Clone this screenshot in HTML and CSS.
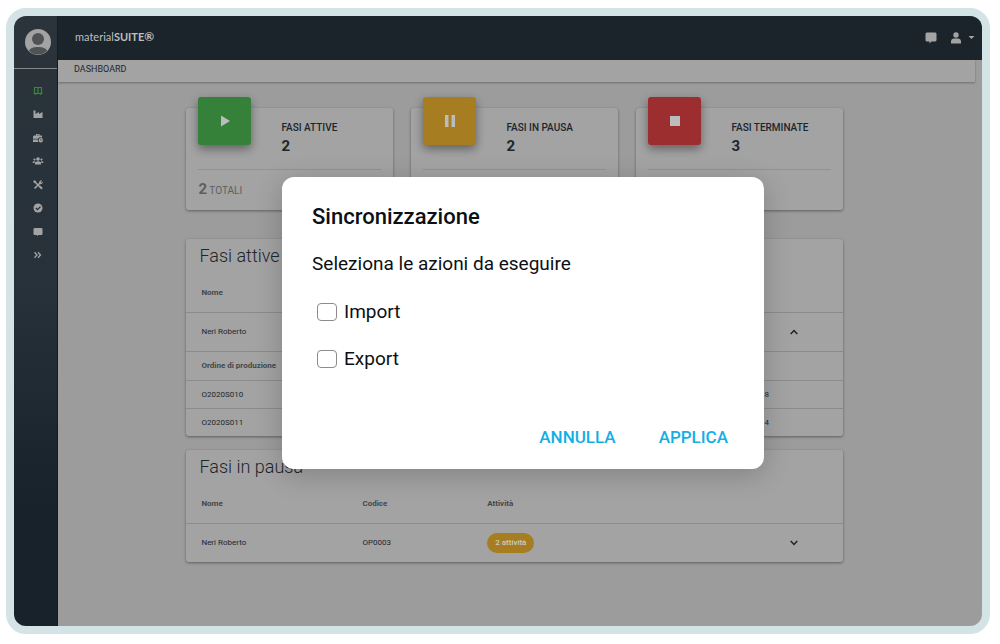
FILE: index.html
```html
<!DOCTYPE html>
<html lang="it">
<head>
    <meta charset="UTF-8">
    <meta name="viewport" content="width=device-width, initial-scale=1.0">
    <title>materialSUITE - Dashboard</title>
    <link rel="stylesheet" href="styles.css">
</head>
<body>
    <div class="frame">
        <aside class="sidebar">
            <a href="#" class="avatar" aria-label="Profilo">
                <svg viewBox="0 0 26 26" width="26" height="26">
                    <circle cx="13" cy="13" r="13" fill="#a3a3a3"/>
                    <circle cx="13" cy="10" r="6" fill="#4f5354"/>
                    <path d="M4 22c1-3 4-4 9-4s8 1 9 4a13 13 0 0 1-18 0z" fill="#4f5354"/>
                </svg>
            </a>
            <nav class="menu">
                <a href="#" class="active" aria-label="Dashboard">
                    <svg viewBox="0 0 10 10"><path d="M1.500 1.500h7v6h-7zM5 1.500v6M.5 7.500h2v1.500M9.500 7.500h-2v1.500" fill="none" stroke="currentColor" stroke-width="1.200"/></svg>
                </a>
                <a href="#" aria-label="Produzione">
                    <svg viewBox="0 0 10 10"><path d="M.5 1.500h2v3.500L6 3v2l3.500-2v6h-9z"/></svg>
                </a>
                <a href="#" aria-label="Lavori">
                    <svg viewBox="0 0 10 10"><path d="M3 1h3.500v1.500H9v2.300a2.500 2.500 0 0 0-4 1H0V3.500l1-1h2zm1 .8v.7h1.500v-.7zM0 6.500h4.800A2.500 2.500 0 0 0 5.500 9H0z"/><path fill-rule="evenodd" d="M7.800 5a2.200 2.200 0 1 1 0 4.400 2.200 2.200 0 0 1 0-4.400zm-.3 1v1.500h1.300V7h-.7V6z"/></svg>
                </a>
                <a href="#" aria-label="Operatori">
                    <svg viewBox="0 0 10 10"><circle cx="5" cy="3" r="1.800"/><circle cx="1.500" cy="3.500" r="1.100"/><circle cx="8.500" cy="3.500" r="1.100"/><path d="M2 8.500V7c0-1 1-1.800 3-1.800S8 6 8 7v1.500zM-.3 7V6c0-.8 1-1 2.300-.8L1.500 7zM10.300 7V6c0-.8-1-1-2.300-.8L8.500 7z"/></svg>
                </a>
                <a href="#" aria-label="Strumenti">
                    <svg viewBox="0 0 10 10"><path d="M2 2l6.500 6.500M1.500 8.500L7 3" stroke="currentColor" stroke-width="1.600"/><path d="M.5.5h1.800l1 1.200-1.600 1.600-1.200-1zM6 3a2.300 2.300 0 0 1 3-2.500L7.800 2l.7.700L9.800 1.500A2.300 2.300 0 0 1 7 4.200zM6 6.500l1-1L9.800 8 8.500 9.500z"/></svg>
                </a>
                <a href="#" aria-label="Completate">
                    <svg viewBox="0 0 10 10"><circle cx="5" cy="5" r="4.500"/><path d="M2.800 5l1.700 1.600 3-3" fill="none" stroke="#222c34" stroke-width="1.300"/></svg>
                </a>
                <a href="#" aria-label="Messaggi">
                    <svg viewBox="0 0 10 10"><path d="M1.300 1h7.400l.8.800v5.400l-.8.800H5.500L4 9.300V8H1.300l-.8-.8V1.800z"/></svg>
                </a>
                <a href="#" aria-label="Espandi">
                    <svg viewBox="0 0 10 10"><path d="M1.500 2.200L4 5 1.500 7.800M5 2.200L7.500 5 5 7.800" fill="none" stroke="currentColor" stroke-width="1.300"/></svg>
                </a>
            </nav>
        </aside>

        <div class="page">
            <header class="topbar">
                <a href="#" class="logo">material<b>SUITE</b><span class="reg">®</span></a>
                <div class="topbar-actions">
                    <button class="icon-btn" aria-label="Messaggi">
                        <svg viewBox="0 0 12 12" width="12" height="12"><path d="M1.500.5h9l1 1v7l-1 1h-4l-2 2v-2h-3l-1-1v-7z"/></svg>
                    </button>
                    <button class="icon-btn" aria-label="Utente">
                        <svg viewBox="0 0 24 12" width="24" height="12"><circle cx="5" cy="3" r="2.700"/><path d="M0 11.500V9.500C0 7.500 1.300 6.500 3 6.500h4c1.700 0 3 1 3 3v2zM17.500 4h6l-3 3z"/></svg>
                    </button>
                </div>
            </header>
            <div class="breadcrumb">DASHBOARD</div>

            <main class="content">
                <section class="stats">
                    <div class="card stat">
                        <div class="stat-icon green">
                            <svg viewBox="0 0 12 12" width="12" height="12"><path d="M2 .5L11 6l-9 5.500z"/></svg>
                        </div>
                        <div class="stat-text">
                            <h3>FASI ATTIVE</h3>
                            <strong>2</strong>
                        </div>
                        <div class="stat-total"><b>2</b> TOTALI</div>
                    </div>
                    <div class="card stat">
                        <div class="stat-icon yellow">
                            <svg viewBox="0 0 12 12" width="12" height="12"><path d="M1 0h3.500v12H1zM7.500 0H11v12H7.500z"/></svg>
                        </div>
                        <div class="stat-text">
                            <h3>FASI IN PAUSA</h3>
                            <strong>2</strong>
                        </div>
                        <div class="stat-total"></div>
                    </div>
                    <div class="card stat">
                        <div class="stat-icon red">
                            <svg viewBox="0 0 12 12" width="12" height="12"><path d="M1 1h10v10H1z"/></svg>
                        </div>
                        <div class="stat-text">
                            <h3>FASI TERMINATE</h3>
                            <strong>3</strong>
                        </div>
                        <div class="stat-total"></div>
                    </div>
                </section>

                <section class="card list">
                    <h2>Fasi attive</h2>
                    <table>
                        <colgroup><col class="c-name"><col class="c-code"><col class="c-act"><col></colgroup>
                        <thead>
                            <tr><th>Nome</th><th></th><th></th><th></th></tr>
                        </thead>
                        <tbody>
                            <tr>
                                <td>Neri Roberto</td><td></td><td></td>
                                <td><button class="toggle" aria-label="Chiudi"><svg viewBox="0 0 8 6" width="8" height="6"><path d="M.7 5L4 1.500 7.300 5"/></svg></button></td>
                            </tr>
                            <tr class="sub"><th>Ordine di produzione</th><th></th><th></th><th></th></tr>
                            <tr class="sub"><td>O2020S010</td><td></td><td class="num">8</td><td></td></tr>
                            <tr class="sub"><td>O2020S011</td><td></td><td class="num">4</td><td></td></tr>
                        </tbody>
                    </table>
                </section>

                <section class="card list">
                    <h2>Fasi in pausa</h2>
                    <table>
                        <colgroup><col class="c-name"><col class="c-code"><col class="c-act"><col></colgroup>
                        <thead>
                            <tr><th>Nome</th><th>Codice</th><th>Attività</th><th></th></tr>
                        </thead>
                        <tbody>
                            <tr>
                                <td>Neri Roberto</td><td>OP0003</td><td><span class="badge">2 attività</span></td>
                                <td><button class="toggle" aria-label="Apri"><svg viewBox="0 0 8 6" width="8" height="6"><path d="M.7 1L4 4.500 7.300 1"/></svg></button></td>
                            </tr>
                        </tbody>
                    </table>
                </section>
            </main>

            <div class="overlay">
                <form class="modal" role="dialog" aria-labelledby="modal-title">
                    <h1 id="modal-title">Sincronizzazione</h1>
                    <p>Seleziona le azioni da eseguire</p>
                    <label><input type="checkbox" name="import"> Import</label>
                    <label><input type="checkbox" name="export"> Export</label>
                    <div class="modal-actions">
                        <button type="button">ANNULLA</button>
                        <button type="button">APPLICA</button>
                    </div>
                </form>
            </div>
        </div>
    </div>
</body>
</html>
```
FILE: styles.css
```css
* {
    margin: 0;
    padding: 0;
    box-sizing: border-box;
}

body {
    min-height: 100vh;
    display: flex;
    padding: 8px 10px 10px 6px;
    background-color: #fff;
    font-family: Roboto, "Liberation Sans", sans-serif;
    color: #1d262c;
}

a {
    color: inherit;
    text-decoration: none;
}

button {
    background: none;
    border: none;
    font-family: inherit;
    cursor: pointer;
}

svg {
    display: block;
    fill: currentColor;
}

.frame {
    flex: 1;
    display: flex;
    border: 8px solid #d4e3e6;
    border-radius: 20px;
    background-color: #d4e3e6;
}

/* sidebar */
.sidebar {
    width: 44px;
    background: linear-gradient(#2b343b, #27313a 45%, #18222b 80%);
    border-right: 1px solid #151c21;
    border-radius: 12px 0 0 12px;
    color: #a3a3a3;
}

.avatar {
    display: flex;
    justify-content: center;
    padding: 13px 0 13px 4px;
    border-bottom: 1px solid #85888a;
}

.menu {
    height: 191px;
    display: flex;
    flex-direction: column;
    justify-content: space-between;
    align-items: center;
    padding: 17px 0 0 4px;
}

.menu svg {
    width: 10px;
    height: 10px;
    overflow: visible;
}

.menu .active {
    color: #36893a;
}

/* page */
.page {
    flex: 1;
    position: relative;
    border-radius: 0 12px 12px 0;
    background-color: #9c9c9c;
}

.topbar {
    height: 44px;
    display: flex;
    justify-content: space-between;
    align-items: center;
    padding: 0 7px 0 17px;
    background-color: #1b242b;
    border-radius: 0 12px 0 0;
    color: #a3a3a3;
}

.logo {
    padding-bottom: 4px;
    font-family: Lato, sans-serif;
    font-size: 11px;
    color: #bdbfc0;
}

.reg {
    font-size: 12px;
    font-weight: 700;
}

.topbar-actions {
    display: flex;
    gap: 14px;
}

.icon-btn {
    color: #a3a3a3;
}

.breadcrumb {
    height: 22px;
    margin-right: 7px;
    padding-left: 16px;
    font-size: 9px;
    line-height: 18px;
    background-color: #a3a3a3;
    box-shadow: 0 1px 2px rgba(0, 0, 0, 0.3);
}

.content {
    padding: 26px 15% 30px 13.9%;
}

.card {
    background-color: #a3a3a3;
    border-radius: 3px;
    box-shadow: 0 1px 3px rgba(0, 0, 0, 0.4);
}

/* stat cards */
.stats {
    display: grid;
    grid-template-columns: repeat(3, 1fr);
    gap: 18px;
    margin-bottom: 29px;
}

.stat {
    position: relative;
    padding: 0 12px;
}

.stat-icon {
    position: absolute;
    top: -11px;
    left: 12px;
    width: 53px;
    height: 48px;
    display: flex;
    justify-content: center;
    align-items: center;
    border-radius: 3px;
    color: #bcbcbc;
    box-shadow: 0 4px 10px rgba(0, 0, 0, 0.4);
}

.green {
    background-color: #36813a;
}

.yellow {
    background-color: #a67d20;
}

.red {
    background-color: #9c2e2f;
}

.stat-text {
    height: 62px;
    padding: 12px 0 0 83px;
    border-bottom: 1px solid #929292;
}

.stat-text h3 {
    font-size: 10px;
    font-weight: 500;
    line-height: 16px;
    white-space: nowrap;
}

.stat-text strong {
    display: block;
    font-size: 15px;
    line-height: 20px;
}

.stat-total {
    height: 40px;
    font-size: 10px;
    line-height: 38px;
    color: #5c5f61;
}

.stat-total b {
    font-size: 15px;
}

/* lists */
.list {
    margin-bottom: 14px;
}

.list h2 {
    height: 34px;
    padding-left: 13px;
    font-size: 18px;
    font-weight: 300;
    line-height: 34px;
}

table {
    width: 100%;
    table-layout: fixed;
    border-collapse: collapse;
    font-size: 8px;
}

.c-name {
    width: 161px;
}

.c-code {
    width: 19%;
}

.c-act {
    width: 47%;
}

th,
td {
    height: 39px;
    padding-left: 15px;
    text-align: left;
}

th {
    font-weight: 700;
    color: #42484b;
    white-space: nowrap;
}

tbody tr {
    border-top: 1px solid #8b8b8b;
}

.sub td {
    height: 28px;
}

.sub th {
    height: 29px;
}

td.num {
    padding-right: 12px;
    text-align: right;
}

.toggle {
    display: block;
    padding: 4px 0;
    margin-left: -6px;
}

.toggle svg {
    fill: none;
    stroke: #1b242b;
    stroke-width: 1.5;
}

.badge {
    display: inline-block;
    padding: 0 8px;
    border-radius: 10px;
    font-weight: 500;
    line-height: 20px;
    background-color: #a67d20;
    color: #cfcbc0;
}

/* sync dialog */
.overlay {
    position: absolute;
    inset: 0;
    display: flex;
    justify-content: center;
    align-items: center;
    padding: 4px 0 0 6px;
}

.modal {
    width: 52.5%;
    padding: 24px 30px 16px;
    border-radius: 12px;
    background-color: #fff;
    color: #0b1014;
    font-size: 19px;
    box-shadow: 0 6px 28px rgba(0, 0, 0, 0.2);
}

.modal h1 {
    font-size: 22px;
    font-weight: 500;
    line-height: 32px;
}

.modal p {
    margin: 15px 0 8px;
    line-height: 32px;
}

.modal label {
    display: flex;
    align-items: center;
    gap: 7px;
    height: 47px;
    padding-left: 5px;
    line-height: 24px;
}

.modal input {
    appearance: none;
    width: 20px;
    height: 18px;
    border: 1px solid #8c8c8c;
    border-radius: 4px;
}

.modal-actions {
    display: flex;
    justify-content: flex-end;
    gap: 43px;
    padding: 39px 6px 0 0;
}

.modal-actions button {
    color: #14aee5;
    font-size: 17px;
    font-weight: 500;
    line-height: 32px;
}
```
